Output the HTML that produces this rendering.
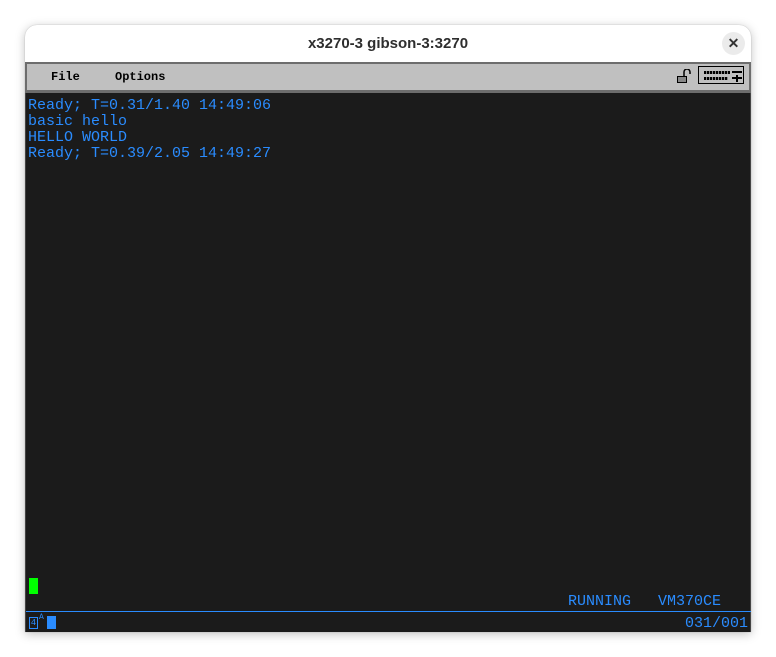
<!DOCTYPE html>
<html><head><style>
html,body{margin:0;padding:0;background:#fff;width:776px;height:657px;overflow:hidden}
.win{position:absolute;left:25px;top:25px;width:726px;height:607px;border-radius:12px 12px 0 0;background:#fff;box-shadow:0 2px 10px rgba(0,0,0,.25),0 0 1px rgba(0,0,0,.3);overflow:hidden}
.title{position:absolute;left:0;top:0;width:726px;height:37px;text-align:center;font:bold 15px "Liberation Sans",sans-serif;color:#2e2e2e;line-height:37px}
.close{position:absolute;right:6px;top:7px;width:23px;height:23px;border-radius:50%;background:#ebebeb;font:bold 14px "Liberation Sans",sans-serif;text-align:center;line-height:23px;color:#333}
.menu{position:absolute;left:0;top:37px;width:722px;height:26px;background:#c0c0c0;border:2px solid #6d6d6d;border-bottom-width:3px}
.menu span{position:absolute;top:6px;font:bold 12px "Liberation Mono",monospace;color:#000}
.term{position:absolute;left:0;top:68px;width:726px;height:539px;background:#1b1b1b;border-left:1px solid #444;border-right:1px solid #444;box-sizing:border-box}
.t{position:absolute;font:15px/16px "Liberation Mono",monospace;color:#2a8cff;white-space:pre}
.d{position:absolute;height:3px;background:repeating-linear-gradient(90deg,#000 0 2px,#888 2px 3px)}
</style></head><body>
<div class="win">
<div class="title">x3270-3 gibson-3:3270</div>
<div class="close">✕</div>
<div class="menu"><span style="left:24px">File</span><span style="left:88px">Options</span>
<svg style="position:absolute;left:649px;top:5px" width="18" height="14" viewBox="0 0 18 14"><rect x="1" y="7" width="10" height="7" fill="#000"/><rect x="2" y="8" width="8" height="5" fill="#888"/><path d="M8 7V3a3 3 0 0 1 6 0v2" fill="none" stroke="#000" stroke-width="1.5"/></svg>
<div style="position:absolute;left:671px;top:2px;width:46px;height:18px;border:1px solid #000;box-sizing:border-box">
<div class="d" style="left:5px;top:4px;width:26px"></div>
<div class="d" style="left:5px;top:10px;width:24px"></div>
<div style="position:absolute;left:33px;top:4px;width:10px;height:2px;background:#000"></div>
<div style="position:absolute;left:33px;top:10px;width:10px;height:2px;background:#000"></div>
<div style="position:absolute;left:37px;top:8px;width:2px;height:7px;background:#000"></div>
</div></div>
<div class="term">
<div class="t" style="left:2px;top:5px">Ready; T=0.31/1.40 14:49:06
basic hello
HELLO WORLD
Ready; T=0.39/2.05 14:49:27</div>
<div style="position:absolute;left:3px;top:485px;width:9px;height:16px;background:#00ff00"></div>
<div class="t" style="left:542px;top:501px">RUNNING   VM370CE</div>
<div style="position:absolute;left:0;top:518px;width:726px;height:1px;background:#2a8cff"></div>
<div style="position:absolute;left:3px;top:524px;width:7px;height:10px;border:1px solid #2a8cff;font:9px/10px 'Liberation Mono',monospace;color:#2a8cff;text-align:center">4</div>
<div style="position:absolute;left:13px;top:520px;font:8px 'Liberation Mono',monospace;color:#2a8cff">A</div>
<div style="position:absolute;left:21px;top:523px;width:9px;height:13px;background:#2a8cff"></div>
<div class="t" style="left:659px;top:523px">031/001</div>
</div>
</div>
</body></html>
